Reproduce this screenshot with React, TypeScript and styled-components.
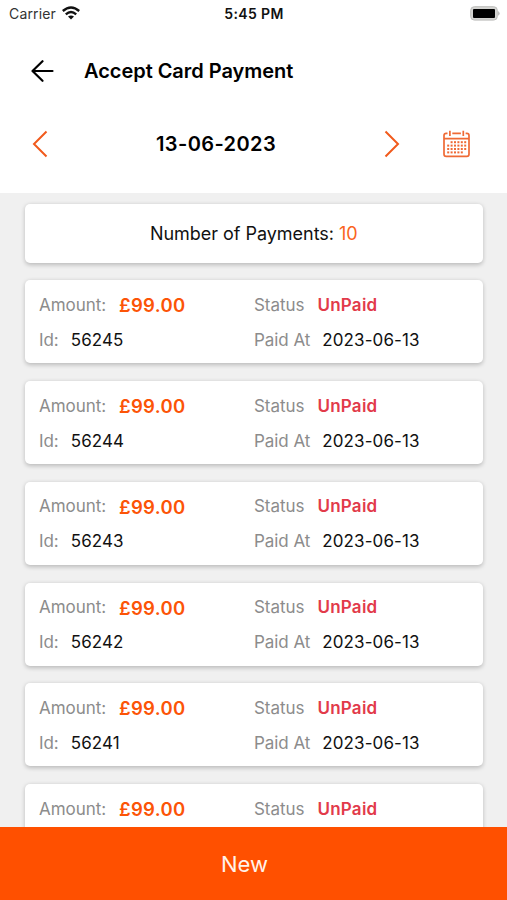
import React from "react";
import styled, { createGlobalStyle } from "styled-components";

const Global = createGlobalStyle`
  * { box-sizing: border-box; }
  body { margin: 0; background: #fff; font-family: Inter, "Liberation Sans", sans-serif; color: #111; }
`;

const Screen = styled.div`
  width: 100%;
  height: 100vh;
  overflow: hidden;
  display: flex;
  flex-direction: column;
`;

const StatusBar = styled.div`
  flex: none;
  height: 28px;
  padding: 0 7px 0 9px;
  display: grid;
  grid-template-columns: 1fr auto 1fr;
  align-items: center;
  font-size: 14px;
`;

const Carrier = styled.div`
  display: flex;
  align-items: center;
  gap: 6px;
  color: #333;
  letter-spacing: 0.15px;
  padding-bottom: 2px;
`;

const Clock = styled.div`
  font-weight: 600;
  letter-spacing: 0.35px;
  padding-bottom: 1px;
  margin-left: -1px;
`;

const Battery = styled.div`
  display: flex;
  justify-content: flex-end;
  padding-bottom: 2px;
`;

const TitleBar = styled.header`
  flex: none;
  height: 85px;
  padding-left: 30px;
  display: flex;
  align-items: center;
  gap: 30px;
`;

const Title = styled.h1`
  margin: 0;
  font-size: 20px;
  font-weight: 600;
  letter-spacing: -0.04px;
  color: #000;
`;

const DateBar = styled.div`
  flex: none;
  height: 80px;
  padding: 1px 37px 20px 32px;
  display: grid;
  grid-template-columns: 16px 1fr 16px 70px;
  align-items: center;
`;

const DateText = styled.div`
  text-align: center;
  font-size: 20px;
  font-weight: 600;
  letter-spacing: 0.4px;
  color: #000;
`;

const CalendarSlot = styled.div`
  display: flex;
  justify-content: flex-end;
`;

const List = styled.main`
  flex: 1;
  min-height: 0;
  overflow: hidden;
  background: #f0f0f0;
  padding: 11px 24.5px 0 25px;
  display: flex;
  flex-direction: column;
  gap: 17.8px;
`;

const Card = styled.section`
  flex: none;
  background: #fff;
  border-radius: 5px;
  box-shadow: 0 1.5px 4px rgba(0, 0, 0, 0.22);
`;

const Summary = styled(Card)`
  height: 58.5px;
  display: flex;
  align-items: center;
  justify-content: center;
  gap: 5px;
  font-size: 18px;
  letter-spacing: -0.03px;
`;

const Count = styled.span`
  color: #fa6420;
`;

const Payment = styled(Card)`
  height: 83px;
  padding: 7px 14px 0;
  display: grid;
  grid-template-columns: 215px 1fr;
  grid-auto-rows: 35px;
`;

const Field = styled.div<{ $gap: number }>`
  display: flex;
  align-items: center;
  gap: ${(p) => p.$gap}px;
  font-size: 17px;
  white-space: nowrap;
`;

const Label = styled.span`
  color: #8c8c8c;
  letter-spacing: -0.05px;
`;

const Value = styled.span`
  letter-spacing: 0.1px;
`;

const Amount = styled.span`
  color: #fc5407;
  font-size: 18.5px;
  font-weight: 600;
  letter-spacing: 0.3px;
  padding-top: 1px;
`;

const Status = styled.span`
  color: #e23a4a;
  font-weight: 600;
  letter-spacing: 0.25px;
`;

const NewButton = styled.button`
  flex: none;
  height: 73px;
  border: 0;
  padding: 0 18px 0 0;
  background: #ff5000;
  color: #fff3ea;
  font: 400 22px Inter, "Liberation Sans", sans-serif;
`;

const WifiIcon = () => (
  <svg width="18" height="14" viewBox="0 0 18 14" fill="none" stroke="#111" strokeWidth="2.4">
    <path d="M0.8 5Q9-2 17.2 5" />
    <path d="M3.8 8.4Q9 3.8 14.2 8.4" />
    <path d="M9 13.4L6 10.6Q9 8.4 12 10.6Z" fill="#111" stroke="none" />
  </svg>
);

const BatteryIcon = () => (
  <svg width="30" height="15" viewBox="0 0 30 15">
    <rect x="0.7" y="0.7" width="26.6" height="13.4" rx="3.6" fill="#d4d4d2" stroke="#bdbdbb" />
    <rect x="3" y="3" width="22" height="9" rx="1" fill="#000" />
    <path d="M28.2 5Q31 7.4 28.2 9.8Z" fill="#b0b0b0" />
  </svg>
);

const BackIcon = () => (
  <svg width="24" height="22" viewBox="0 0 24 22" fill="none" stroke="#000" strokeWidth="2.2" strokeLinecap="round" strokeLinejoin="round">
    <path d="M12.5 1.2L2.5 11L12.5 20.8M2.5 11H22.5" />
  </svg>
);

const Chevron = ({ d }: { d: string }) => (
  <svg width="16" height="28" viewBox="0 0 16 28" fill="none" stroke="#f15a1c" strokeWidth="2">
    <path d={d} />
  </svg>
);

const dots = [0, 1, 2, 3].flatMap((r) =>
  [0, 1, 2, 3, 4, 5]
    .filter((c) => !(r === 0 && c === 0) && !(r === 3 && c === 5))
    .map((c) => ({ x: 4.2 + c * 3.4, y: 11.2 + r * 3.4 }))
);

const CalendarIcon = () => (
  <svg width="27" height="28" viewBox="0 0 27 28" fill="none" stroke="#ef6a35" strokeWidth="1.7">
    <path d="M4.5 3.4H3.2Q1 3.4 1 5.6V24.2Q1 26.4 3.2 26.4H23.8Q26 26.4 26 24.2V5.6Q26 3.4 23.8 3.4H22.6M9.3 3.4H17.9M1 8.6H26" />
    <path d="M6.9 0.8V6M20.3 0.8V6" />
    {dots.map((p) => (
      <rect key={`${p.x}-${p.y}`} x={p.x} y={p.y} width="2" height="2" fill="#ef6a35" stroke="none" />
    ))}
  </svg>
);

interface PaymentItem {
  amount: string;
  id?: number;
  paidAt?: string;
}

const payments: PaymentItem[] = [
  { amount: "£99.00", id: 56245, paidAt: "2023-06-13" },
  { amount: "£99.00", id: 56244, paidAt: "2023-06-13" },
  { amount: "£99.00", id: 56243, paidAt: "2023-06-13" },
  { amount: "£99.00", id: 56242, paidAt: "2023-06-13" },
  { amount: "£99.00", id: 56241, paidAt: "2023-06-13" },
  { amount: "£99.00" },
];

export default function App() {
  return (
    <Screen>
      <Global />
      <StatusBar>
        <Carrier>
          Carrier <WifiIcon />
        </Carrier>
        <Clock>5:45 PM</Clock>
        <Battery>
          <BatteryIcon />
        </Battery>
      </StatusBar>
      <TitleBar>
        <BackIcon />
        <Title>Accept Card Payment</Title>
      </TitleBar>
      <DateBar>
        <Chevron d="M14.5 1.5L2 14L14.5 26.5" />
        <DateText>13-06-2023</DateText>
        <Chevron d="M1.5 1.5L14 14L1.5 26.5" />
        <CalendarSlot>
          <CalendarIcon />
        </CalendarSlot>
      </DateBar>
      <List>
        <Summary>
          Number of Payments: <Count>10</Count>
        </Summary>
        {payments.map((p, i) => (
          <Payment key={i}>
            <Field $gap={13}>
              <Label>Amount:</Label>
              <Amount>{p.amount}</Amount>
            </Field>
            <Field $gap={13}>
              <Label>Status</Label>
              <Status>UnPaid</Status>
            </Field>
            {p.id && (
              <Field $gap={12}>
                <Label>Id:</Label>
                <Value>{p.id}</Value>
              </Field>
            )}
            {p.paidAt && (
              <Field $gap={12}>
                <Label>Paid At</Label>
                <Value>{p.paidAt}</Value>
              </Field>
            )}
          </Payment>
        ))}
      </List>
      <NewButton>New</NewButton>
    </Screen>
  );
}
